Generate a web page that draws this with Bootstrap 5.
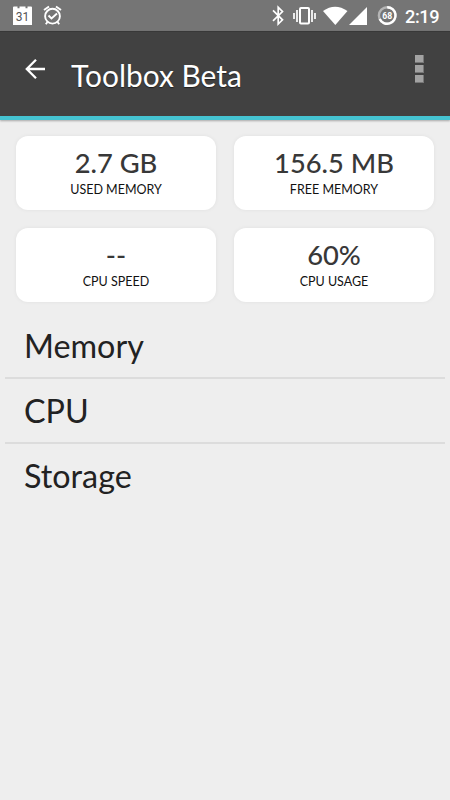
<!DOCTYPE html>
<html lang="en">
<head>
<meta charset="utf-8">
<meta name="viewport" content="width=device-width, initial-scale=1">
<title>Toolbox Beta</title>
<link href="https://cdn.jsdelivr.net/npm/bootstrap@5.3.0/dist/css/bootstrap.min.css" rel="stylesheet">
<style>
body{font-family:Lato,sans-serif;background:#eee;color:#222;min-height:800px;overflow:hidden}
svg{display:block}
.status-bar{height:31px;background:#757575}
.clock{font:500 18.2px/31px Roboto,sans-serif}
.app-bar{height:89px;background:#414141;border-top:1px solid #383838;border-bottom:4px solid #45c3d1;box-shadow:0 1px 2px rgba(0,0,0,.3)}
.app-title{font-size:29.9px;line-height:36px;text-shadow:0 1px 1px rgba(0,0,0,.5);margin:2px 0 0 24px}
.back{margin:-10px 0 0 24px}
.menu-dots{margin:-10px 26px 0 0}
.stats{grid-template-columns:1fr 1fr;padding:16px 16px 0;gap:18px}
.stat{height:74px;border-radius:12px;box-shadow:0 0 4px rgba(0,0,0,.06);padding-top:10px}
.stat-value{font-size:27.3px;line-height:34px;font-weight:500;color:#383838}
.stat-name{font-size:12.5px;line-height:16px;color:#111;margin-top:2px}
.sections{margin:12px 5px 0}
.section-item{height:65px;padding-left:19px;font-size:32.3px;line-height:63px;border-bottom:2px solid #dcdcdc}
.section-item:last-child{border:0}
</style>
<script src="https://cdn.jsdelivr.net/npm/bootstrap@5.3.0/dist/js/bootstrap.bundle.min.js"></script>
</head>
<body>
<div class="status-bar d-flex">
<svg width="450" height="31" viewBox="0 0 450 31" role="img" aria-label="Status">
<g fill="#fff">
<path d="M13 7.500q0-1 1-1h3.500v1.700h2V6.500h6v1.700h2V6.500h3.500q1 0 1 1V25H13z"/>
<text x="22.500" y="21.300" font-family="Roboto,sans-serif" font-size="12" text-anchor="middle" fill="#555">31</text>
<g fill="none" stroke="#fff" stroke-width="1.900"><circle cx="52.500" cy="16.200" r="7.400"/><path d="M44 10l5-3.600M61 10l-5-3.600M48.500 15.500l3 3 5.500-5M47.500 22l-1.700 2.300M57.500 22l1.700 2.300"/></g>
<path d="M273 10.300l9.500 9.500-4.300 4.200V7.300l4.300 4.200-9.500 9.400" fill="none" stroke="#fff" stroke-width="1.700"/>
<rect x="300" y="8" width="9" height="15.500" rx="1" fill="none" stroke="#fff" stroke-width="2"/>
<path d="M296 10h2v12h-2zM293 13h2v6h-2zM311 10h2v12h-2zM314 13h2v6h-2z" opacity=".85"/>
<path d="M323 11q12-8.500 24.500 0L335.300 25z"/>
<path d="M367 7v18h-18z"/>
</g>
<circle cx="387.200" cy="15.500" r="8.300" fill="none" stroke="#b5b5b5" stroke-width="2.400"/>
<path d="M387.200 7.200a8.300 8.300 0 1 1-7.500 11.800" fill="none" stroke="#fff" stroke-width="2.400"/>
<text x="387.200" y="19" text-anchor="middle" font-family="Roboto,sans-serif" font-weight="700" font-size="9.800" textLength="10" lengthAdjust="spacingAndGlyphs" fill="#fff">68</text>
<text x="405" y="22.500" class="clock" fill="#fff" textLength="34.500">2:19</text>
</svg>
</div>
<header class="app-bar d-flex align-items-center text-white">
<svg class="back" width="23" height="22" viewBox="0 0 23 22" fill="none" stroke="#fff" stroke-width="2.300"><path d="M21 11H3M12 1.800L2.800 11l9.200 9.200"/></svg>
<h1 class="app-title fw-normal">Toolbox Beta</h1>
<svg class="menu-dots ms-auto" width="10" height="28" viewBox="0 0 10 28"><path fill="#777" d="M1 0h9v8H1zM1 10h9v8H1zM1 20h9v8H1z"/><path fill="#a2a2a2" d="M1 0h8v7H1zM1 10h8v7H1zM1 20h8v7H1z"/></svg>
</header>
<main>
<div class="stats d-grid">
<div class="stat bg-white text-center"><div class="stat-value">2.7 GB</div><div class="stat-name">USED MEMORY</div></div>
<div class="stat bg-white text-center"><div class="stat-value">156.5 MB</div><div class="stat-name">FREE MEMORY</div></div>
<div class="stat bg-white text-center"><div class="stat-value">--</div><div class="stat-name">CPU SPEED</div></div>
<div class="stat bg-white text-center"><div class="stat-value">60%</div><div class="stat-name">CPU USAGE</div></div>
</div>
<div class="sections">
<div class="section-item">Memory</div>
<div class="section-item">CPU</div>
<div class="section-item">Storage</div>
</div>
</main>
</body>
</html>
